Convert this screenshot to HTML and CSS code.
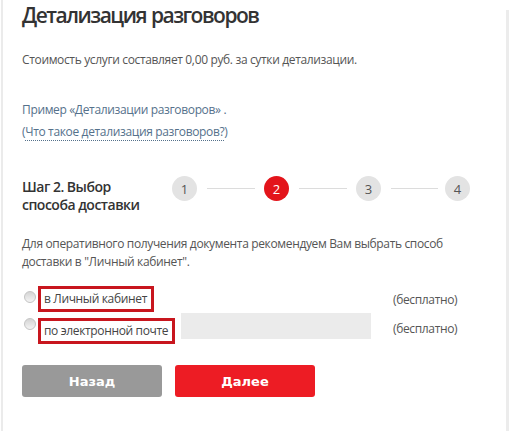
FILE: index.html
```html
<!DOCTYPE html>
<html lang="ru">
<head>
<meta charset="utf-8">
<title>Детализация разговоров</title>
<link rel="stylesheet" href="styles.css">
</head>
<body>
<div class="page">
  <h1 class="title">Детализация разговоров</h1>
  <p class="cost">Стоимость услуги составляет 0,00 руб. за сутки детализации.</p>
  <div class="links">
    <div><a class="link" href="#">Пример «Детализации разговоров»</a> .</div>
    <div>(<a class="link dotted" href="#">Что такое детализация разговоров?</a>)</div>
  </div>
  <div class="steps">
    <div class="step-title">Шаг 2. Выбор<br>способа доставки</div>
    <div class="step-track">
      <span class="circle">1</span>
      <span class="line"></span>
      <span class="circle active">2</span>
      <span class="line"></span>
      <span class="circle">3</span>
      <span class="line short"></span>
      <span class="circle">4</span>
    </div>
  </div>
  <p class="note">Для оперативного получения документа рекомендуем Вам выбрать способ доставки в "Личный кабинет".</p>
  <div class="options">
    <div class="option first">
      <div class="option-main">
        <span class="radio"></span>
        <span class="label">в Личный кабинет</span>
      </div>
      <span class="price">(бесплатно)</span>
    </div>
    <div class="option second">
      <div class="option-main">
        <span class="radio"></span>
        <span class="label">по электронной почте</span>
        <span class="email-input"></span>
      </div>
      <span class="price">(бесплатно)</span>
    </div>
  </div>
  <div class="buttons">
    <button class="btn back">Назад</button>
    <button class="btn next">Далее</button>
  </div>
</div>
</body>
</html>
```

FILE: styles.css
```css
html, body {
  margin: 0;
  padding: 0;
  background: #fff;
}
body {
  font-family: "Open Sans", "DejaVu Sans", sans-serif;
  color: #555;
  letter-spacing: -0.35px;
}
.page {
  position: relative;
  margin-left: 1px;
  border-left: 2px solid #ebebeb;
  padding-left: 19px;
  min-height: 431px;
  box-sizing: border-box;
}
.page::after {
  content: "";
  position: absolute;
  top: 10px;
  right: 2px;
  bottom: 0;
  width: 3px;
  background: #ececec;
}
.title {
  margin: 0;
  font-size: 21px;
  line-height: 30px;
  font-weight: 600;
  letter-spacing: -1.5px;
  word-spacing: 1px;
  color: #333;
}
.cost {
  margin: 21px 0 0;
  font-size: 12px;
  line-height: 18px;
}
.links {
  margin-top: 30px;
  font-size: 12px;
  line-height: 22px;
  color: #55718b;
}
.link {
  color: #55718b;
  text-decoration: none;
}
.dotted {
  border-bottom: 1px dotted #55718b;
}
.steps {
  display: flex;
  align-items: flex-start;
  margin-top: 33px;
}
.step-title {
  width: 150px;
  margin-top: 2px;
  font-size: 14px;
  line-height: 18px;
  font-weight: 600;
  letter-spacing: -0.5px;
  color: #333;
}
.step-track {
  display: flex;
  align-items: center;
  letter-spacing: 0;
}
.circle {
  width: 25px;
  height: 25px;
  border-radius: 50%;
  background: #e3e3e3;
  color: #555;
  font-size: 13px;
  display: flex;
  align-items: center;
  justify-content: center;
}
.circle.active {
  background: #e3141b;
  color: #fff;
}
.line {
  width: 48px;
  height: 1px;
  background: #dcdcdc;
  margin: 0 9px 0 10px;
}
.line.short {
  width: 47px;
  margin-right: 7px;
}
.note {
  margin: 21px 0 0;
  width: 440px;
  font-size: 12px;
  line-height: 18px;
}
.options {
  margin-top: 15px;
  font-size: 12px;
}
.option {
  display: flex;
  align-items: center;
}
.option-main {
  display: flex;
  align-items: center;
  width: 371px;
}
.radio {
  box-sizing: border-box;
  width: 12px;
  height: 12px;
  border-radius: 50%;
  border: 1px solid #c4c4c4;
  background: linear-gradient(#d4d4d4, #f4f4f4);
  margin: 5px 2px 0 2px;
  align-self: flex-start;
}
.label {
  border: 3px solid #c8161e;
  padding: 0 4px 0 3px;
  line-height: 20px;
  color: #444;
  white-space: nowrap;
}
.option.second {
  margin-top: 1px;
}
.option.second .label {
  margin-top: 5px;
}
.email-input {
  width: 190px;
  height: 26px;
  background: #ebebeb;
  margin-left: 6px;
  align-self: flex-start;
}
.price {
  color: #555;
}
.buttons {
  display: flex;
  gap: 13px;
  margin-top: 21px;
}
.btn {
  width: 140px;
  height: 32px;
  border: none;
  border-radius: 3px;
  color: #fff;
  font-family: "DejaVu Sans", sans-serif;
  font-weight: bold;
  font-size: 13px;
  letter-spacing: 0;
  padding: 0;
}
.btn.back {
  background: #999;
}
.btn.next {
  background: #ed1c24;
}
```
